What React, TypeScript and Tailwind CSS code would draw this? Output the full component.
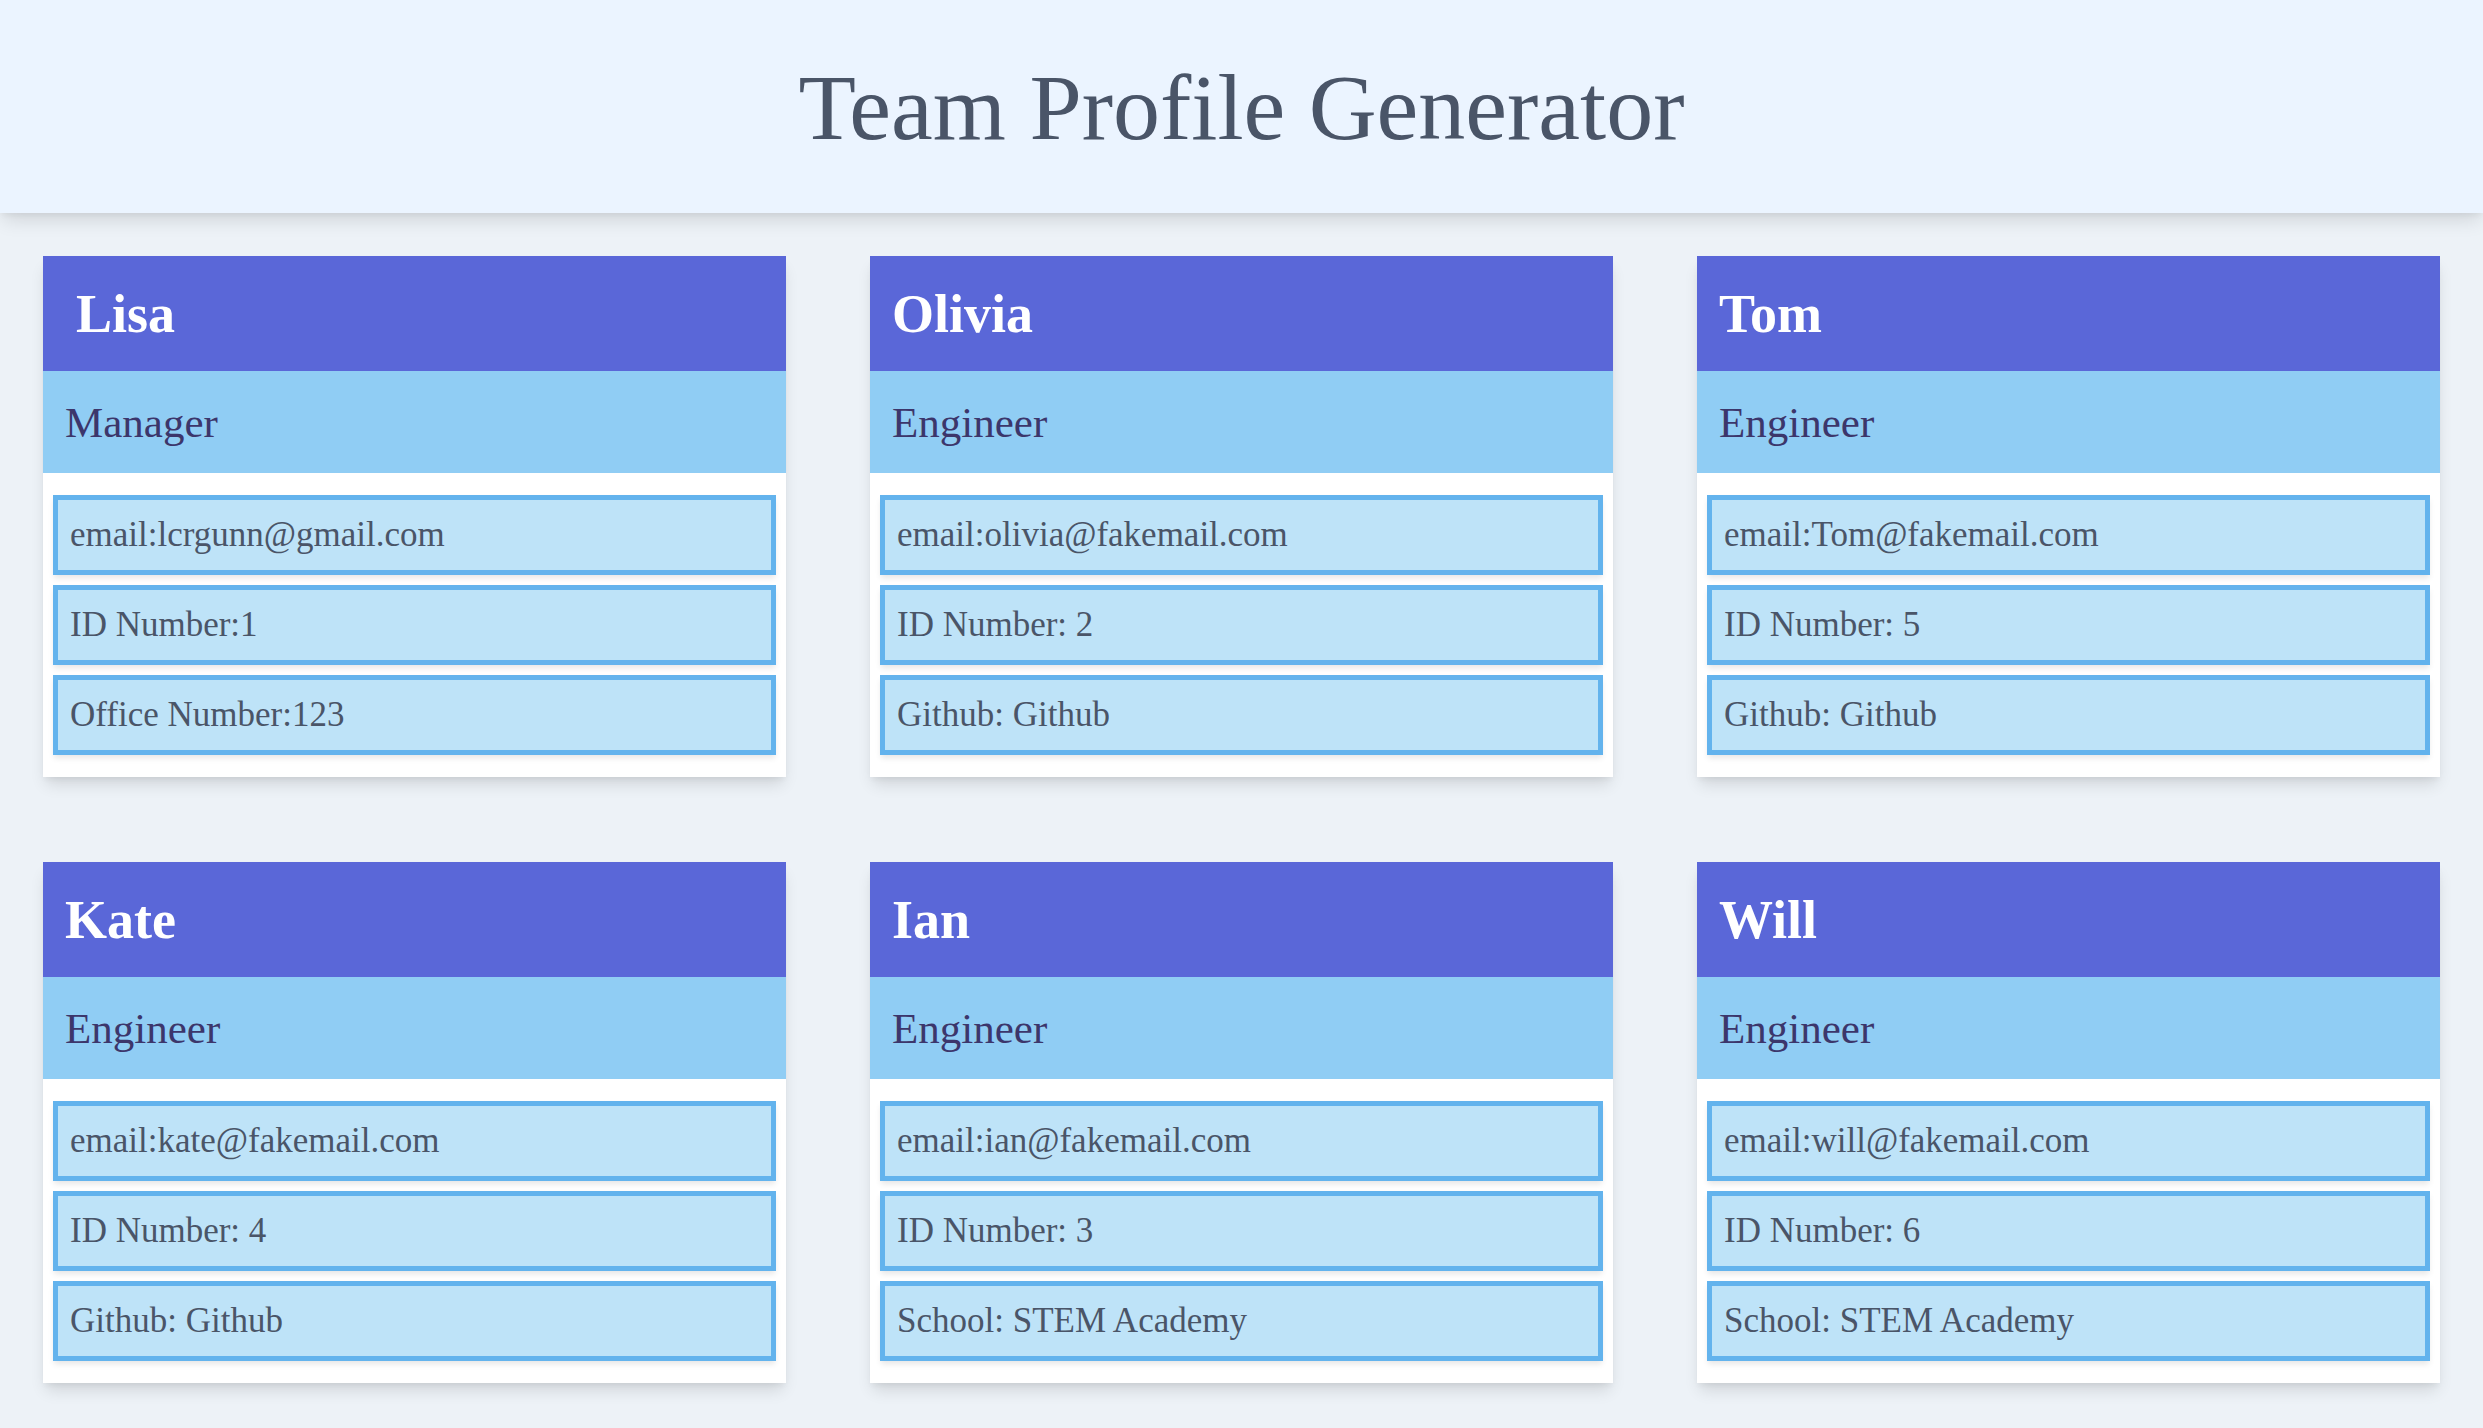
const team = [
    { name: "Lisa", role: "Manager", lines: ["email:lcrgunn@gmail.com", "ID Number:1", "Office Number:123"], indent: true },
    { name: "Olivia", role: "Engineer", lines: ["email:olivia@fakemail.com", "ID Number: 2", "Github: Github"] },
    { name: "Tom", role: "Engineer", lines: ["email:Tom@fakemail.com", "ID Number: 5", "Github: Github"] },
    { name: "Kate", role: "Engineer", lines: ["email:kate@fakemail.com", "ID Number: 4", "Github: Github"] },
    { name: "Ian", role: "Engineer", lines: ["email:ian@fakemail.com", "ID Number: 3", "School: STEM Academy"] },
    { name: "Will", role: "Engineer", lines: ["email:will@fakemail.com", "ID Number: 6", "School: STEM Academy"] },
];

export default function App() {
    return (
        <div className="min-h-screen bg-[#edf2f7] font-['Liberation_Serif',serif]">
            {/* Header */}
            <header className="relative z-10 h-[213px] bg-[#ebf4ff] flex items-center justify-center shadow-[0_10px_18px_-3px_rgba(0,0,0,0.12),0_4px_6px_-2px_rgba(0,0,0,0.05)]">
                <h1 className="text-[94px] leading-none text-[#4a5568]">Team Profile Generator</h1>
            </header>

            {/* Cards */}
            <main className="grid grid-cols-3 gap-x-[84px] gap-y-[85px] p-[43px]">
                {team.map((m) => (
                    <div key={m.name} className="bg-white shadow-[0_10px_15px_-3px_rgba(0,0,0,0.12),0_4px_6px_-2px_rgba(0,0,0,0.06)]">
                        <div className={`h-[115px] bg-[#5a67d8] flex items-center ${m.indent ? "pl-[33px]" : "pl-[22px]"}`}>
                            <h2 className="text-[54px] leading-none font-bold text-white">{m.name}</h2>
                        </div>
                        <div className="h-[102px] bg-[#90cdf4] flex items-center px-[22px]">
                            <h3 className="text-[43px] leading-none text-[#3c366b]">{m.role}</h3>
                        </div>
                        <ul className="flex flex-col gap-[10px] px-[10px] pt-[22px] pb-[22px]">
                            {m.lines.map((line) => (
                                <li
                                    key={line}
                                    className="h-[80px] border-[5px] border-[#63b3ed] bg-[#bee3f8] flex items-center pl-[12px] text-[35px] text-[#4a5568] shadow-[0_4px_6px_-1px_rgba(0,0,0,0.1)]"
                                >
                                    {line}
                                </li>
                            ))}
                        </ul>
                    </div>
                ))}
            </main>
        </div>
    );
}
